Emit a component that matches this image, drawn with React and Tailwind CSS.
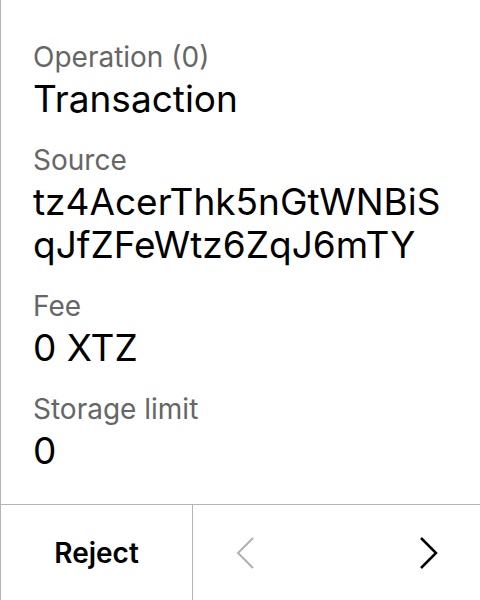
import React from "react";

const fields = [
  { label: "Operation (0)", value: "Transaction" },
  { label: "Source", value: "tz4AcerThk5nGtWNBiSqJfZFeWtz6ZqJ6mTY" },
  { label: "Fee", value: "0 XTZ" },
  { label: "Storage limit", value: "0" },
];

const Chevron = ({ dir, color }) => (
  <svg width="20" height="34" viewBox="0 0 20 34" fill="none">
    <path
      d={dir === "left" ? "M18 2 L3 17 L18 32" : "M2 2 L17 17 L2 32"}
      stroke={color}
      strokeWidth={dir === "left" ? 2 : 2.5}
    />
  </svg>
);

export default function App() {
  return (
    <div
      className="w-[480px] h-[600px] flex flex-col bg-white border-l border-[#b5b5b5] text-black"
      style={{ fontFamily: "Inter, 'Noto Sans', sans-serif" }}
    >
      <div className="flex-1 flex flex-col gap-[20px] pl-[32px] pr-[36px] pt-[37px]">
        {fields.map((f) => (
          <div key={f.label} className="flex flex-col">
            <div className="text-[28px] leading-[40px] text-[#666666]">
              {f.label}
            </div>
            <div className="text-[37px] leading-[43px] break-all">
              {f.value}
            </div>
          </div>
        ))}
      </div>
      <div className="h-[96px] flex border-t border-[#b5b5b5]">
        <button className="w-[192px] flex items-center justify-center text-[28px] font-semibold border-r border-[#b5b5b5]">
          Reject
        </button>
        <div className="flex-1 flex items-center justify-between pl-[42px] pr-[41px]">
          <Chevron dir="left" color="#b0b0b0" />
          <Chevron dir="right" color="#000000" />
        </div>
      </div>
    </div>
  );
}
